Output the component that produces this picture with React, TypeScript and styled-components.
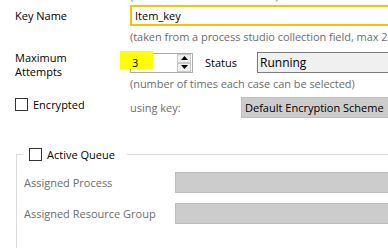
import React from "react";
import styled, { createGlobalStyle } from "styled-components";

const Global = createGlobalStyle`
  html, body { margin: 0; padding: 0; background: #ffffff; overflow: hidden; }
  body { width: 388px; height: 248px; font-family: "Open Sans", "Noto Sans", sans-serif; font-size: 11px; color: #000; }
  #root { width: 388px; height: 248px; overflow: hidden; }
`;

const Page = styled.div`
  width: 520px;
  margin-top: -12px;
`;

const TopGrid = styled.div`
  display: grid;
  grid-template-columns: 115px 1fr;
  padding-left: 15px;
  align-items: start;
`;

const Label = styled.div<{ $span?: number }>`
  grid-column: 1;
  grid-row: span ${(p) => p.$span ?? 1};
  line-height: 14px;
  color: #000;
  align-self: ${(p) => (p.$span ? "start" : "center")};
`;

const Hint = styled.div<{ $mt?: number; $mb?: number }>`
  grid-column: 2;
  color: #6d6d6d;
  line-height: 15px;
  white-space: nowrap;
  letter-spacing: -0.05px;
  margin-top: ${(p) => p.$mt ?? 0}px;
  margin-bottom: ${(p) => p.$mb ?? 0}px;
`;

const TextBox = styled.div`
  grid-column: 2;
  height: 21px;
  box-sizing: border-box;
  border: 2px solid #fbc000;
  display: flex;
  align-items: center;
  padding-left: 3px;
  width: 320px;
`;

const FieldRow = styled.div<{ $mt?: number }>`
  grid-column: 2;
  display: flex;
  align-items: center;
  margin-top: ${(p) => p.$mt ?? 0}px;
`;

const Spin = styled.div`
  position: relative;
  width: 63px;
  height: 20px;
  box-sizing: border-box;
  border: 1px solid #ababab;
  background: #fff;
  display: flex;
  align-items: center;
  justify-content: space-between;
  padding-left: 1px;
`;

const Highlight = styled.span`
  background: #ffff00;
  position: absolute;
  left: -11px;
  top: -3px;
  width: 33px;
  height: 18px;
`;

const SpinValue = styled.span`
  position: relative;
`;

const SpinButtons = styled.div`
  display: flex;
  flex-direction: column;
  margin-right: 1px;
`;

const SpinButton = styled.div`
  width: 14px;
  height: 9px;
  box-sizing: border-box;
  border: 1px solid #c9c9c9;
  background: #f0f0f0;
  display: flex;
  align-items: center;
  justify-content: center;
`;

const InlineLabel = styled.span<{ $w: number; $gray?: boolean }>`
  width: ${(p) => p.$w}px;
  color: ${(p) => (p.$gray ? "#6d6d6d" : "#000")};
  white-space: nowrap;
  box-sizing: border-box;
`;

const Select = styled.div`
  height: 21px;
  width: 200px;
  box-sizing: border-box;
  border: 1px solid #7a7a7a;
  background: #f0f0f0;
  display: flex;
  align-items: center;
  padding-left: 2px;
  font-size: 12px;
`;

const GrayBox = styled.div<{ $w: number }>`
  height: 21px;
  width: ${(p) => p.$w}px;
  box-sizing: border-box;
  border: 1px solid #bdbdbd;
  background: #cccccc;
  display: flex;
  align-items: center;
  padding-left: 3px;
  white-space: nowrap;
`;

const CheckLabel = styled.label`
  display: flex;
  align-items: center;
  gap: 5px;
  white-space: nowrap;
`;

const CheckBox = styled.span`
  width: 13px;
  height: 13px;
  box-sizing: border-box;
  border: 1px solid #333;
  background: #fff;
  flex: none;
`;

const Group = styled.fieldset`
  margin: 29px 0 0 16px;
  padding: 0 0 40px 7px;
  border: 1px solid #dcdcdc;
  width: 440px;
`;

const Legend = styled.legend`
  padding: 0 12px 0 6px;
  margin-left: -1px;
`;

const GroupRows = styled.div`
  display: flex;
  flex-direction: column;
  gap: 10px;
  margin-top: 10px;
`;

const GroupRow = styled.div`
  display: flex;
  align-items: center;
`;

const Arrow = ({ up }: { up?: boolean }) => (
  <svg width="7" height="4" viewBox="0 0 7 4">
    <path d={up ? "M0 4 L3.5 0 L7 4 Z" : "M0 0 L3.5 4 L7 0 Z"} fill="#000" />
  </svg>
);

export default function App() {
  return (
    <>
      <Global />
      <Page>
        <TopGrid>
          <Hint $mb={2}>(maximum of 255 characters)</Hint>
          <Label>Key Name</Label>
          <TextBox>Item_key</TextBox>
          <Hint $mt={3}>(taken from a process studio collection field, max 255 characters)</Hint>
          <Label $span={2} style={{ marginTop: 7 }}>
            Maximum
            <br />
            Attempts
          </Label>
          <FieldRow $mt={8}>
            <Spin>
              <Highlight />
              <SpinValue>3</SpinValue>
              <SpinButtons>
                <SpinButton>
                  <Arrow up />
                </SpinButton>
                <SpinButton>
                  <Arrow />
                </SpinButton>
              </SpinButtons>
            </Spin>
            <InlineLabel $w={64} style={{ paddingLeft: 12 }}>Status</InlineLabel>
            <Select>Running</Select>
          </FieldRow>
          <Hint $mt={3}>(number of times each case can be selected)</Hint>
          <CheckLabel style={{ gridColumn: 1, marginTop: 6 }}>
            <CheckBox />
            Encrypted
          </CheckLabel>
          <FieldRow $mt={6}>
            <InlineLabel $w={111} $gray>using key:</InlineLabel>
            <GrayBox $w={200}>Default Encryption Scheme</GrayBox>
          </FieldRow>
        </TopGrid>
        <Group>
          <Legend>
            <CheckLabel>
              <CheckBox />
              Active Queue
            </CheckLabel>
          </Legend>
          <GroupRows>
            <GroupRow>
              <InlineLabel $w={151} $gray>Assigned Process</InlineLabel>
              <GrayBox $w={260} />
            </GroupRow>
            <GroupRow>
              <InlineLabel $w={151} $gray>Assigned Resource Group</InlineLabel>
              <GrayBox $w={260} />
            </GroupRow>
          </GroupRows>
        </Group>
      </Page>
    </>
  );
}
